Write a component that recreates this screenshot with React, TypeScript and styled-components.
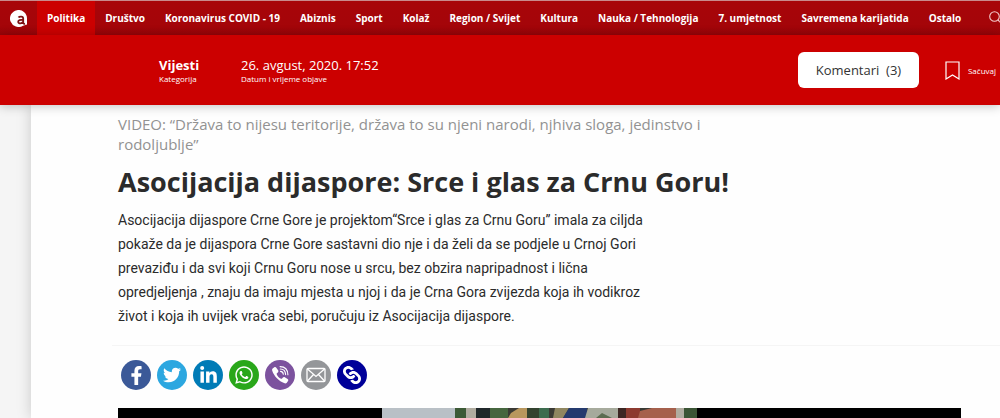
import React from "react";
import styled, { createGlobalStyle } from "styled-components";
import { FaFacebookF, FaTwitter, FaLinkedinIn, FaWhatsapp, FaLink } from "react-icons/fa";

const GlobalStyle = createGlobalStyle`
  *, *::before, *::after { box-sizing: border-box; }
  body {
    margin: 0;
    overflow: hidden;
    background: #f5f5f5;
    font-family: "Open Sans", sans-serif;
    color: #2b2b2b;
  }
  h1, p { margin: 0; }
`;

const Page = styled.div`
  min-height: 100vh;
  display: flex;
  flex-direction: column;
  overflow: hidden;
`;

const NavBar = styled.nav`
  display: flex;
  align-items: stretch;
  height: 35px;
  border-top: 1px solid #c98a8c;
  background: linear-gradient(#a80509, #a40509 75%, #960408);
`;

const HomeLink = styled.a`
  display: flex;
  align-items: center;
  padding: 0 10px;
  flex: none;
`;

const NavLink = styled.a<{ $active?: boolean }>`
  display: flex;
  align-items: center;
  padding: 0 10px;
  flex: none;
  font-size: 10px;
  font-weight: 700;
  white-space: nowrap;
  color: #fff;
  text-decoration: none;
  background: ${(p) => (p.$active ? "#cc0000" : "transparent")};
`;

const SearchButton = styled.button`
  flex: none;
  margin-left: 18px;
  padding: 0;
  border: 0;
  background: none;
  color: #fff;
  display: flex;
  align-items: center;
`;

const InfoBar = styled.header`
  position: relative;
  display: flex;
  align-items: center;
  height: 70px;
  padding-left: 159px;
  background: #cc0000;
  color: #fff;
  box-shadow: 0 1px 10px rgba(0, 0, 0, 0.25);
`;

const Meta = styled.div<{ $width?: string }>`
  width: ${(p) => p.$width ?? "auto"};
  display: flex;
  flex-direction: column;
  padding-top: 2px;
`;

const MetaValue = styled.span<{ $bold?: boolean }>`
  font-size: 13px;
  line-height: 16px;
  font-weight: ${(p) => (p.$bold ? 700 : 400)};
`;

const MetaLabel = styled.span`
  font-size: 8px;
  line-height: 12px;
`;

const Actions = styled.div`
  margin-left: auto;
  display: flex;
  align-items: center;
  gap: 26px;
  padding-right: 4px;
`;

const CommentsButton = styled.button`
  height: 36px;
  width: 121px;
  border: 0;
  border-radius: 6px;
  background: #fff;
  color: #333;
  font: 400 13px "Open Sans", sans-serif;
  white-space: pre;
`;

const SaveButton = styled.button`
  display: flex;
  align-items: center;
  gap: 8px;
  padding: 0;
  border: 0;
  background: none;
  color: #fff;
  font: 400 8px "Open Sans", sans-serif;
`;

const Article = styled.main`
  flex: 1;
  margin-left: 31px;
  padding: 9px 0 0 87px;
  background: #fefefe;
  box-shadow: 0 0 14px rgba(0, 0, 0, 0.18);
`;

const Kicker = styled.p`
  max-width: 600px;
  font-size: 15px;
  line-height: 20px;
  color: #929292;
`;

const Title = styled.h1`
  margin-top: 9px;
  font-size: 27px;
  line-height: 38px;
  font-weight: 700;
`;

const Lead = styled.p`
  margin-top: 7px;
  font-family: Roboto, sans-serif;
  font-size: 14px;
  line-height: 24px;
`;

const ShareBar = styled.div`
  display: flex;
  gap: 6px;
  margin: 17px 0 18px -6px;
  padding: 14px 0 0 9px;
  border-top: 1px solid #f5f5f5;
`;

const ShareLink = styled.a<{ $color: string }>`
  display: flex;
  align-items: center;
  justify-content: center;
  width: 30px;
  height: 30px;
  border-radius: 50%;
  color: #fff;
  background: ${(p) => p.$color};
`;

const ChainIcon = styled(FaLink)`
  transform: rotate(90deg);
`;

const Video = styled.figure`
  margin: 0 39px 0 0;
  height: 10px;
  display: flex;
  justify-content: center;
  background: #000;
`;

const sections = [
  "Politika", "Društvo", "Koronavirus COVID - 19", "Abiznis", "Sport", "Kolaž", "Region / Svijet",
  "Kultura", "Nauka / Tehnologija", "7. umjetnost", "Savremena karijatida", "Ostalo",
];

const leadLines = [
  "Asocijacija dijaspore Crne Gore je projektom“Srce i glas za Crnu Goru” imala za ciljda",
  "pokaže da je dijaspora Crne Gore sastavni dio nje i da želi da se podjele u Crnoj Gori",
  "prevaziđu i da svi koji Crnu Goru nose u srcu, bez obzira napripadnost i lična",
  "opredjeljenja , znaju da imaju mjesta u njoj i da je Crna Gora zvijezda koja ih vodikroz",
  "život i koja ih uvijek vraća sebi, poručuju iz Asocijacija dijaspore.",
];

const Logo = () => (
  <svg width="17" height="17" viewBox="0 0 17 17" aria-hidden="true">
    <path d="M17 8.500A8.500 8.500 0 1 0 13 15.700L17 14.500z" fill="#fff" />
    <path d="M8.500 7.600c1-1.500 4.700-1.500 4.700.9v4.300c0 .9.8 1.200 1.800.8M13.200 10c-3-.6-5 .1-5 1.700 0 2.400 4.100 2.100 5 0" fill="none" stroke="#7c1214" strokeWidth="1.8" />
  </svg>
);

const SearchIcon = () => (
  <svg width="14" height="14" viewBox="0 0 14 14" fill="none" stroke="#f3c9ca" strokeWidth="1.1" aria-hidden="true">
    <circle cx="5.500" cy="5.500" r="4.800" />
    <path d="M9 9l4.500 4.500" />
  </svg>
);

const BookmarkIcon = () => (
  <svg width="15" height="19" viewBox="0 0 15 19" fill="none" stroke="#fff" strokeWidth="1.2" aria-hidden="true">
    <path d="M1 1h13v17l-6.500-4L1 18z" />
  </svg>
);

const MailIcon = () => (
  <svg width="20" height="16" viewBox="0 0 20 16" fill="none" stroke="#fff" strokeWidth="1.3" aria-hidden="true">
    <rect x="1" y="1.500" width="18" height="13" rx="1" />
    <path d="M1.500 2l8.500 7.500L18.500 2M1.500 14l6-6.500M18.500 14l-6-6.500" />
  </svg>
);

const ViberIcon = () => (
  <svg width="20" height="20" viewBox="0 0 20 20" fill="none" stroke="#fff" aria-hidden="true">
    <path
      fill="#fff"
      stroke="none"
      d="M4.300 2.300c.8-.5 1.500-.3 2 .4l1.800 2.600c.5.800.4 1.500-.3 2.100l-.9.8c-.3.3-.3.6-.2 1 .9 2.200 2.200 3.600 4.300 4.500.4.200.8.1 1.100-.2l.8-1c.5-.6 1.200-.7 1.900-.3l2.800 1.900c.8.600.9 1.200.4 2l-1.200 1.600c-.6.7-1.300.9-2.200.6C8.600 15.900 4.400 11.600 2.200 5.700c-.3-.8-.2-1.500.4-2.100z"
    />
    <path strokeWidth="1.100" strokeLinecap="round" d="M10.500 6.400c1.700.1 2.700 1.100 2.800 2.900M10.300 4c3.200.1 5.200 2.200 5.300 5.600M10.100 1.600c4.700.1 7.700 3.200 7.800 8.200" />
  </svg>
);

const VideoStill = () => (
  <svg width="315" height="10" viewBox="0 0 315 10" role="img" aria-label="Video">
    <rect width="315" height="10" fill="#3a3a34" />
    <rect width="73" height="10" fill="#b9c0c6" />
    <rect x="73" width="11" height="10" fill="#3c5a36" />
    <rect x="84" width="10" height="10" fill="#b0aca0" />
    <rect x="94" width="14" height="10" fill="#20282a" />
    <rect x="108" width="18" height="10" fill="#46663f" />
    <path d="M126 10l3-5 8-5h8v10z" fill="#b8975e" />
    <rect x="145" width="12" height="10" fill="#33432f" />
    <rect x="157" width="10" height="10" fill="#3d6c4e" />
    <path d="M173 0h14l-6 10h-10z" fill="#8f8660" />
    <path d="M187 0h18v10h-24z" fill="#243a6e" />
    <path d="M203 10l3-10h30l6 10z" fill="#a6aa9c" />
    <path d="M214 10l6-5 10 5z" fill="#5c6c50" />
    <rect x="236" width="20" height="10" fill="#3c2623" />
    <rect x="244" width="14" height="10" fill="#8c3a30" />
    <path d="M258 3l12-3h30v10h-44z" fill="#a5604c" />
    <rect x="294" width="8" height="10" fill="#b0aca0" />
    <rect x="302" width="13" height="10" fill="#3b5535" />
  </svg>
);

const shares = [
  { name: "Facebook", color: "#3b5998", icon: <FaFacebookF size={19} /> },
  { name: "Twitter", color: "#2ca7e0", icon: <FaTwitter size={18} /> },
  { name: "LinkedIn", color: "#007bb6", icon: <FaLinkedinIn size={19} /> },
  { name: "WhatsApp", color: "#29a71a", icon: <FaWhatsapp size={20} /> },
  { name: "Viber", color: "#7c529e", icon: <ViberIcon /> },
  { name: "E-mail", color: "#949699", icon: <MailIcon /> },
  { name: "Link", color: "#000099", icon: <ChainIcon size={18} /> },
];

export default function App() {
  return (
    <Page>
      <GlobalStyle />
      <NavBar>
        <HomeLink href="#" aria-label="Početna"><Logo /></HomeLink>
        {sections.map((s, i) => (
          <NavLink key={s} href="#" $active={i === 0}>{s}</NavLink>
        ))}
        <SearchButton aria-label="Pretraga"><SearchIcon /></SearchButton>
      </NavBar>
      <InfoBar>
        <Meta $width="82px">
          <MetaValue $bold>Vijesti</MetaValue>
          <MetaLabel>Kategorija</MetaLabel>
        </Meta>
        <Meta>
          <MetaValue>26. avgust, 2020. 17:52</MetaValue>
          <MetaLabel>Datum i vrijeme objave</MetaLabel>
        </Meta>
        <Actions>
          <CommentsButton>{"Komentari  (3)"}</CommentsButton>
          <SaveButton><BookmarkIcon />Sačuvaj</SaveButton>
        </Actions>
      </InfoBar>
      <Article>
        <Kicker>VIDEO: “Država to nijesu teritorije, država to su njeni narodi, njhiva sloga, jedinstvo i rodoljublje”</Kicker>
        <Title>Asocijacija dijaspore: Srce i glas za Crnu Goru!</Title>
        <Lead>
          {leadLines.map((line) => (
            <React.Fragment key={line}>{line}<br /></React.Fragment>
          ))}
        </Lead>
        <ShareBar>
          {shares.map((s) => (
            <ShareLink key={s.name} href="#" aria-label={s.name} $color={s.color}>{s.icon}</ShareLink>
          ))}
        </ShareBar>
        <Video><VideoStill /></Video>
      </Article>
    </Page>
  );
}
